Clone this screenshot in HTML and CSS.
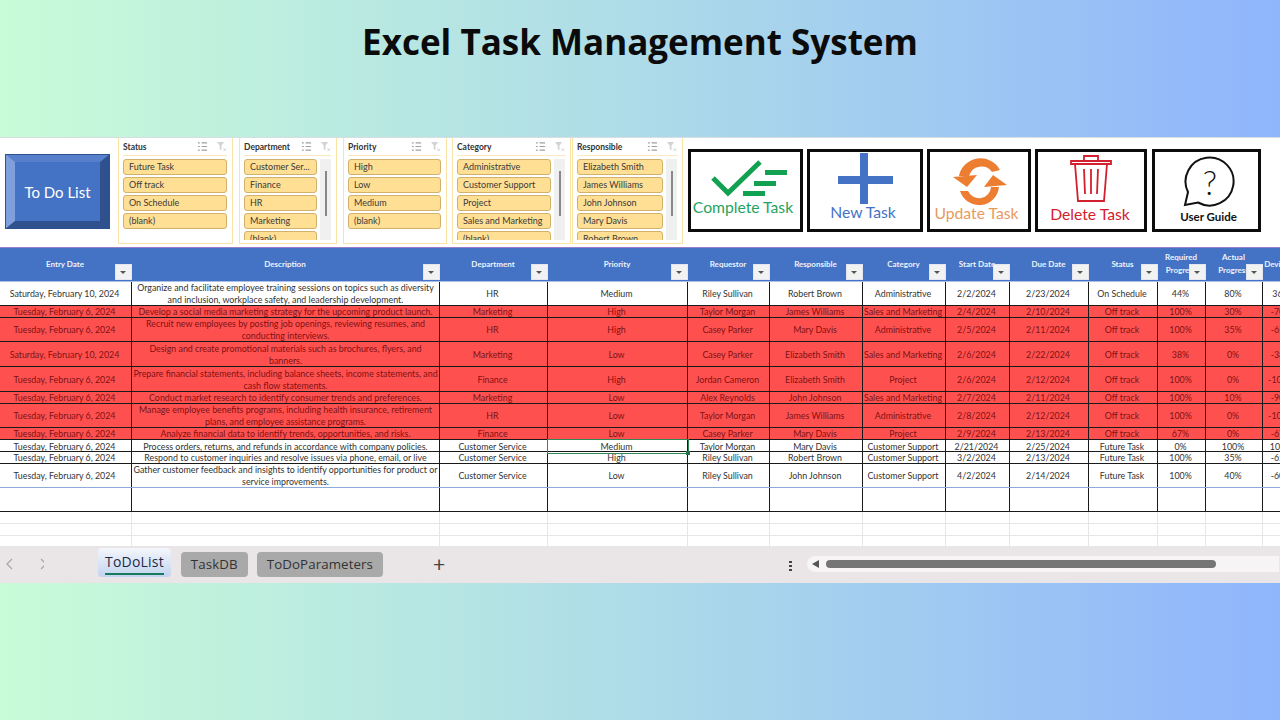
FILE: index.html
```html
<!DOCTYPE html>
<html lang="en">
<head>
    <meta charset="UTF-8">
    <title>Excel Task Management System</title>
    <link rel="stylesheet" href="styles.css">
</head>
<body>

    <svg class="defs" width="0" height="0">
        <symbol id="multi" viewBox="0 0 12 12">
            <path d="M1 2h2M1 6h2M1 10h2M5 2h6M5 6h6M5 10h6" stroke="#a0a0a0" stroke-width="1.2" fill="none"/>
        </symbol>
        <symbol id="clear" viewBox="0 0 12 12">
            <path d="M1 1h8L6 5v5L4 9V5z" fill="#d4d4d4"/>
            <path d="M8 8l3 3M11 8l-3 3" stroke="#cfcfcf" stroke-width="1"/>
        </symbol>
    </svg>

    <h1 class="title">Excel Task Management System</h1>

    <div class="sheet">
        <div class="ribbon">
            <div class="todo-btn">To Do List</div>

            <div class="slicer status">
                <div class="slicer-head"><span>Status</span><svg><use href="#multi"/></svg><svg><use href="#clear"/></svg></div>
                <div class="slicer-body">
                    <div class="items">
                        <div class="item">Future Task</div>
                        <div class="item">Off track</div>
                        <div class="item">On Schedule</div>
                        <div class="item">(blank)</div>
                    </div>
                </div>
            </div>

            <div class="slicer department">
                <div class="slicer-head"><span>Department</span><svg><use href="#multi"/></svg><svg><use href="#clear"/></svg></div>
                <div class="slicer-body">
                    <div class="items">
                        <div class="item">Customer Ser...</div>
                        <div class="item">Finance</div>
                        <div class="item">HR</div>
                        <div class="item">Marketing</div>
                        <div class="item">(blank)</div>
                    </div>
                    <div class="track"><div class="thumb"></div></div>
                </div>
            </div>

            <div class="slicer priority">
                <div class="slicer-head"><span>Priority</span><svg><use href="#multi"/></svg><svg><use href="#clear"/></svg></div>
                <div class="slicer-body">
                    <div class="items">
                        <div class="item">High</div>
                        <div class="item">Low</div>
                        <div class="item">Medium</div>
                        <div class="item">(blank)</div>
                    </div>
                </div>
            </div>

            <div class="slicer category">
                <div class="slicer-head"><span>Category</span><svg><use href="#multi"/></svg><svg><use href="#clear"/></svg></div>
                <div class="slicer-body">
                    <div class="items">
                        <div class="item">Administrative</div>
                        <div class="item">Customer Support</div>
                        <div class="item">Project</div>
                        <div class="item">Sales and Marketing</div>
                        <div class="item">(blank)</div>
                    </div>
                    <div class="track"><div class="thumb"></div></div>
                </div>
            </div>

            <div class="slicer responsible">
                <div class="slicer-head"><span>Responsible</span><svg><use href="#multi"/></svg><svg><use href="#clear"/></svg></div>
                <div class="slicer-body">
                    <div class="items">
                        <div class="item">Elizabeth Smith</div>
                        <div class="item">James Williams</div>
                        <div class="item">John Johnson</div>
                        <div class="item">Mary Davis</div>
                        <div class="item">Robert Brown</div>
                    </div>
                    <div class="track"><div class="thumb"></div></div>
                </div>
            </div>

            <div class="action complete">
                <svg viewBox="0 0 109 38" width="109" height="38">
                    <path d="M22 18l15 15L69 2" fill="none" stroke="#12a150" stroke-width="5"/>
                    <path d="M74 10h22v5H74zM63 21h22v5H63zM52 31h22v5H52z" fill="#12a150"/>
                </svg>
                <div class="label">Complete Task</div>
            </div>
            <div class="action new">
                <svg viewBox="0 0 110 51" width="110" height="51">
                    <path d="M50 0h8v23h25v8H58v20h-8V31H28v-8h22z" fill="#4472c4"/>
                </svg>
                <div class="label">New Task</div>
            </div>
            <div class="action update">
                <svg viewBox="0 0 98 50" width="98" height="50">
                    <g fill="#ed7d31">
                        <path d="M23 22L47 20L37 32z"/>
                        <path d="M29 21A22 22 0 0 1 70 15L62 17A13 13 0 0 0 39 21z"/>
                        <path d="M63 20L77 30L54 32z"/>
                        <path d="M30 36L38 36A12 12 0 0 0 61 32L69 32A20 20 0 0 1 30 36z"/>
                    </g>
                </svg>
                <div class="label">Update Task</div>
            </div>
            <div class="action delete">
                <svg viewBox="0 0 106 51" width="106" height="51">
                    <g fill="none" stroke="#d3202e" stroke-width="1.8">
                        <path d="M33 9h40v3H33zM46 9V4h14v5M37 12l3 37h26l3-37"/>
                        <path d="M46 17l1 25M53 17v25M60 17l-1 25"/>
                    </g>
                </svg>
                <div class="label">Delete Task</div>
            </div>
            <div class="action guide">
                <svg viewBox="0 0 104 56" width="104" height="56">
                    <path d="M33 39A24 24 0 1 1 43 49.500L30 52z" fill="none" stroke="#111" stroke-width="2"/>
                    <text x="55" y="42" class="mark">?</text>
                </svg>
                <div class="label">User Guide</div>
            </div>
        </div>

        <div class="row head">
            <div class="cell">Entry Date<i class="filter"></i></div>
            <div class="cell">Description<i class="filter"></i></div>
            <div class="cell">Department<i class="filter"></i></div>
            <div class="cell">Priority<i class="filter"></i></div>
            <div class="cell">Requestor<i class="filter"></i></div>
            <div class="cell">Responsible<i class="filter"></i></div>
            <div class="cell">Category<i class="filter"></i></div>
            <div class="cell">Start Date<i class="filter"></i></div>
            <div class="cell">Due Date<i class="filter"></i></div>
            <div class="cell">Status<i class="filter"></i></div>
            <div class="cell"><span>Required<br>Progress</span><i class="filter"></i></div>
            <div class="cell"><span>Actual<br>Progress</span><i class="filter"></i></div>
            <div class="cell">Deviation</div>
        </div>

        <div class="row tall">
            <div class="cell">Saturday, February 10, 2024</div>
            <div class="cell">Organize and facilitate employee training sessions on topics such as diversity and inclusion, workplace safety, and leadership development.</div>
            <div class="cell">HR</div><div class="cell">Medium</div><div class="cell">Riley Sullivan</div><div class="cell">Robert Brown</div><div class="cell">Administrative</div>
            <div class="cell">2/2/2024</div><div class="cell">2/23/2024</div><div class="cell">On Schedule</div><div class="cell">44%</div><div class="cell">80%</div><div class="cell">36%</div>
        </div>
        <div class="row short late">
            <div class="cell">Tuesday, February 6, 2024</div>
            <div class="cell">Develop a social media marketing strategy for the upcoming product launch.</div>
            <div class="cell">Marketing</div><div class="cell">High</div><div class="cell">Taylor Morgan</div><div class="cell">James Williams</div><div class="cell">Sales and Marketing</div>
            <div class="cell">2/4/2024</div><div class="cell">2/10/2024</div><div class="cell">Off track</div><div class="cell">100%</div><div class="cell">30%</div><div class="cell">-70%</div>
        </div>
        <div class="row tall late">
            <div class="cell">Tuesday, February 6, 2024</div>
            <div class="cell">Recruit new employees by posting job openings, reviewing resumes, and conducting interviews.</div>
            <div class="cell">HR</div><div class="cell">High</div><div class="cell">Casey Parker</div><div class="cell">Mary Davis</div><div class="cell">Administrative</div>
            <div class="cell">2/5/2024</div><div class="cell">2/11/2024</div><div class="cell">Off track</div><div class="cell">100%</div><div class="cell">35%</div><div class="cell">-65%</div>
        </div>
        <div class="row wide late">
            <div class="cell">Saturday, February 10, 2024</div>
            <div class="cell">Design and create promotional materials such as brochures, flyers, and banners.</div>
            <div class="cell">Marketing</div><div class="cell">Low</div><div class="cell">Casey Parker</div><div class="cell">Elizabeth Smith</div><div class="cell">Sales and Marketing</div>
            <div class="cell">2/6/2024</div><div class="cell">2/22/2024</div><div class="cell">Off track</div><div class="cell">38%</div><div class="cell">0%</div><div class="cell">-38%</div>
        </div>
        <div class="row wide late">
            <div class="cell">Tuesday, February 6, 2024</div>
            <div class="cell">Prepare financial statements, including balance sheets, income statements, and cash flow statements.</div>
            <div class="cell">Finance</div><div class="cell">High</div><div class="cell">Jordan Cameron</div><div class="cell">Elizabeth Smith</div><div class="cell">Project</div>
            <div class="cell">2/6/2024</div><div class="cell">2/12/2024</div><div class="cell">Off track</div><div class="cell">100%</div><div class="cell">0%</div><div class="cell">-100%</div>
        </div>
        <div class="row short late">
            <div class="cell">Tuesday, February 6, 2024</div>
            <div class="cell">Conduct market research to identify consumer trends and preferences.</div>
            <div class="cell">Marketing</div><div class="cell">Low</div><div class="cell">Alex Reynolds</div><div class="cell">John Johnson</div><div class="cell">Sales and Marketing</div>
            <div class="cell">2/7/2024</div><div class="cell">2/11/2024</div><div class="cell">Off track</div><div class="cell">100%</div><div class="cell">10%</div><div class="cell">-90%</div>
        </div>
        <div class="row tall late">
            <div class="cell">Tuesday, February 6, 2024</div>
            <div class="cell">Manage employee benefits programs, including health insurance, retirement plans, and employee assistance programs.</div>
            <div class="cell">HR</div><div class="cell">Low</div><div class="cell">Taylor Morgan</div><div class="cell">James Williams</div><div class="cell">Administrative</div>
            <div class="cell">2/8/2024</div><div class="cell">2/12/2024</div><div class="cell">Off track</div><div class="cell">100%</div><div class="cell">0%</div><div class="cell">-100%</div>
        </div>
        <div class="row short late">
            <div class="cell">Tuesday, February 6, 2024</div>
            <div class="cell">Analyze financial data to identify trends, opportunities, and risks.</div>
            <div class="cell">Finance</div><div class="cell">Low</div><div class="cell">Casey Parker</div><div class="cell">Mary Davis</div><div class="cell">Project</div>
            <div class="cell">2/9/2024</div><div class="cell">2/13/2024</div><div class="cell">Off track</div><div class="cell">67%</div><div class="cell">0%</div><div class="cell">-67%</div>
        </div>
        <div class="row short">
            <div class="cell">Tuesday, February 6, 2024</div>
            <div class="cell">Process orders, returns, and refunds in accordance with company policies.</div>
            <div class="cell">Customer Service</div><div class="cell selected">Medium</div><div class="cell">Taylor Morgan</div><div class="cell">Mary Davis</div><div class="cell">Customer Support</div>
            <div class="cell">2/21/2024</div><div class="cell">2/25/2024</div><div class="cell">Future Task</div><div class="cell">0%</div><div class="cell">100%</div><div class="cell">100%</div>
        </div>
        <div class="row short">
            <div class="cell">Tuesday, February 6, 2024</div>
            <div class="cell">Respond to customer inquiries and resolve issues via phone, email, or live</div>
            <div class="cell">Customer Service</div><div class="cell">High</div><div class="cell">Riley Sullivan</div><div class="cell">Robert Brown</div><div class="cell">Customer Support</div>
            <div class="cell">3/2/2024</div><div class="cell">2/13/2024</div><div class="cell">Future Task</div><div class="cell">100%</div><div class="cell">35%</div><div class="cell">-65%</div>
        </div>
        <div class="row tall last">
            <div class="cell">Tuesday, February 6, 2024</div>
            <div class="cell">Gather customer feedback and insights to identify opportunities for product or service improvements.</div>
            <div class="cell">Customer Service</div><div class="cell">Low</div><div class="cell">Riley Sullivan</div><div class="cell">John Johnson</div><div class="cell">Customer Support</div>
            <div class="cell">4/2/2024</div><div class="cell">2/14/2024</div><div class="cell">Future Task</div><div class="cell">100%</div><div class="cell">40%</div><div class="cell">-60%</div>
        </div>

        <div class="row tall">
            <div class="cell"></div><div class="cell"></div><div class="cell"></div><div class="cell"></div><div class="cell"></div><div class="cell"></div><div class="cell"></div><div class="cell"></div><div class="cell"></div><div class="cell"></div><div class="cell"></div><div class="cell"></div><div class="cell"></div>
        </div>
        <div class="row short empty">
            <div class="cell"></div><div class="cell"></div><div class="cell"></div><div class="cell"></div><div class="cell"></div><div class="cell"></div><div class="cell"></div><div class="cell"></div><div class="cell"></div><div class="cell"></div><div class="cell"></div><div class="cell"></div><div class="cell"></div>
        </div>
        <div class="row short empty">
            <div class="cell"></div><div class="cell"></div><div class="cell"></div><div class="cell"></div><div class="cell"></div><div class="cell"></div><div class="cell"></div><div class="cell"></div><div class="cell"></div><div class="cell"></div><div class="cell"></div><div class="cell"></div><div class="cell"></div>
        </div>
        <div class="row tail empty">
            <div class="cell"></div><div class="cell"></div><div class="cell"></div><div class="cell"></div><div class="cell"></div><div class="cell"></div><div class="cell"></div><div class="cell"></div><div class="cell"></div><div class="cell"></div><div class="cell"></div><div class="cell"></div><div class="cell"></div>
        </div>

        <div class="tabbar">
            <svg class="nav" viewBox="0 0 44 12" width="44" height="12">
                <path d="M12 1L7 6l5 5M41 1l5 5-5 5" fill="none" stroke="#a8a8a8" stroke-width="1.300"/>
            </svg>
            <div class="tab active">ToDoList</div>
            <div class="tab">TaskDB</div>
            <div class="tab">ToDoParameters</div>
            <div class="plus">+</div>
            <div class="dots"><i></i><i></i><i></i></div>
            <div class="scroll">
                <div class="arrow"></div>
                <div class="scroll-thumb"></div>
            </div>
        </div>
    </div>

</body>
</html>
```
FILE: styles.css
```css
body {
    margin: 0;
    height: 720px;
    overflow: hidden;
    font-family: "Lato", "Open Sans", sans-serif;
    background: linear-gradient(90deg, #c8fcd8, #aedbe8 50%, #8fb5fc);
}
.defs {
    position: absolute;
}
.title {
    margin: 0;
    height: 137px;
    padding-top: 17px;
    box-sizing: border-box;
    text-align: center;
    font-family: "Open Sans", sans-serif;
    font-size: 35px;
    line-height: 50px;
    font-weight: 700;
    color: #0b0b0b;
}
.sheet {
    position: relative;
    height: 446px;
    background: #fff;
    overflow: hidden;
    border-top: 1px solid #d8dde2;
    box-sizing: border-box;
}
/* selection edge along the top of the sheet */
.sheet::before {
    content: "";
    position: absolute;
    left: 546px;
    top: -1px;
    width: 141px;
    height: 1px;
    background: #1b6b3e;
}

/* ribbon */
.ribbon {
    display: flex;
    height: 109px;
    border-bottom: 1px solid #9a7fc8;
    box-sizing: content-box;
    align-items: flex-start;
}
.todo-btn {
    width: 105px;
    height: 75px;
    margin: 16px 8px 0 5px;
    box-sizing: border-box;
    display: flex;
    align-items: center;
    justify-content: center;
    background: #4472c4;
    border-style: solid;
    border-width: 8px 10px;
    border-color: #5680cc #2f528f #2f528f #7fa0dc;
    outline: 1px solid #2f528f;
    outline-offset: -1px;
    color: #fff;
    font-size: 15px;
    white-space: nowrap;
}
.slicer {
    height: 106px;
    box-sizing: border-box;
    border: 1px solid #fbe3a6;
    border-top: 0;
    padding: 0 5px 0 4px;
    background: #fff;
}
.status { width: 115px; margin-right: 6px; }
.department { width: 98px; margin-right: 6px; }
.priority { width: 104px; margin-right: 5px; }
.category { width: 119px; margin-right: 1px; }
.responsible { width: 111px; margin-right: 5px; }
.slicer-head {
    display: flex;
    align-items: center;
    height: 17px;
    border-bottom: 1px solid #fbe9bd;
    font-size: 8.5px;
    font-weight: 700;
    color: #333;
}
.slicer-head span {
    flex: 1;
}
.slicer-head svg {
    width: 11px;
    height: 11px;
    margin-left: 8px;
}
.slicer-body {
    display: flex;
    gap: 3px;
    height: 81px;
    margin-top: 3px;
    overflow: hidden;
}
.items {
    flex: 1;
}
.item {
    height: 16px;
    margin-bottom: 2px;
    padding-left: 5px;
    box-sizing: border-box;
    background: #ffdf94;
    border: 1px solid #d2b16a;
    border-radius: 3px;
    font-size: 9px;
    line-height: 14px;
    color: #3a3a3a;
    white-space: nowrap;
    overflow: hidden;
}
.track {
    width: 11px;
    background: #f0f0f0;
    display: flex;
    justify-content: center;
}
.thumb {
    width: 2px;
    height: 45px;
    margin-top: 12px;
    background: #888;
}
.action {
    height: 83px;
    margin-top: 11px;
    box-sizing: border-box;
    border: 3px solid #0c0c0c;
    text-align: center;
    overflow: hidden;
    font-size: 15.7px;
}
.action svg {
    display: block;
}
.label {
    white-space: nowrap;
    line-height: 16px;
}
.complete { width: 115px; margin-right: 4px; color: #1fa35e; }
.new { width: 116px; margin-right: 4px; color: #4472c4; }
.update { width: 104px; margin-right: 4px; color: #e89a5e; }
.delete { width: 112px; margin-right: 5px; color: #d3202e; }
.guide { width: 109px; color: #111; }
.complete svg { margin-top: 8px; }
.new svg { margin-top: 1px; }
.update svg { margin-top: 3px; }
.guide svg { margin-top: 1px; }
.complete .label { margin-top: 1px; padding-right: 5px; }
.new .label { padding-right: 4px; }
.update .label { padding-right: 5px; }
.delete .label { margin-top: 3px; padding-right: 2px; }
.guide .label { margin-top: 2px; padding-left: 4px; font-size: 11.5px; font-weight: 700; line-height: 12px; }
.mark {
    font-family: "Lato", sans-serif;
    font-weight: 300;
    font-size: 33px;
    text-anchor: middle;
    fill: #111;
}

/* table */
.row {
    display: grid;
    grid-template-columns: 132px 308px 108px 140px 82px 93px 83px 64px 79px 69px 48px 57px 39px;
    width: 1302px;
    box-sizing: border-box;
    border-bottom: 1px solid #1a1a1a;
    color: #333;
    font-size: 8.85px;
    line-height: 12px;
}
.cell {
    display: flex;
    align-items: center;
    justify-content: center;
    box-sizing: border-box;
    position: relative;
    overflow: hidden;
    text-align: center;
    white-space: nowrap;
    border-right: 1px solid #1a1a1a;
    padding: 1px 2px 0 0;
}
.cell:nth-child(2) {
    white-space: normal;
    padding-right: 0;
}
.head {
    height: 34px;
    background: #4472c4;
    color: #eef2fb;
    font-size: 8px;
    font-weight: 700;
    line-height: 13px;
    border-bottom: 1px solid #a9c0e8;
}
.head .cell {
    border-right: 0;
    padding: 0 2px 1px 0;
}
.filter {
    position: absolute;
    right: 0;
    bottom: 1px;
    width: 17px;
    height: 16px;
    background: #f2f2f2;
    border: 1px solid #e3e6ee;
    box-sizing: border-box;
}
.filter::after {
    content: "";
    position: absolute;
    left: 4px;
    top: 6px;
    border: 3.500px solid transparent;
    border-top: 3.500px solid #555;
    border-bottom: 0;
}
.tall { height: 24px; }
.wide { height: 25px; }
.short { height: 12px; }
.tail { height: 11px; }
.late {
    background: #ff5050;
    color: #7d1212;
}
.last {
    border-bottom: 1px solid #8eaadb;
}
.selected {
    overflow: visible;
    z-index: 1;
    outline: 1px solid #2f8a58;
}
.selected::after {
    content: "";
    position: absolute;
    right: -3px;
    bottom: -2px;
    width: 4px;
    height: 4px;
    background: #217346;
}
.empty {
    border-bottom: 1px solid #e6e6e6;
}
.empty .cell {
    border-right: 1px solid #e6e6e6;
}

/* sheet tabs */
.tabbar {
    display: flex;
    align-items: flex-start;
    height: 36px;
    background: #eae6e7;
    color: #333;
}
.nav {
    margin: 11px 0 0 0;
    flex: none;
}
.tab {
    height: 25px;
    margin: 5px 9px 0 0;
    padding: 0 10px;
    box-sizing: border-box;
    background: #a9a9a9;
    border-radius: 4px;
    font-family: "Open Sans", sans-serif;
    font-size: 13.3px;
    line-height: 25px;
    letter-spacing: .1px;
}
.tab.active {
    margin: 1px 10px 0 54px;
    height: 29px;
    padding: 0 7px;
    background: linear-gradient(#f4f6fb, #c2d4f0);
    font-size: 14px;
    letter-spacing: .2px;
    line-height: 27px;
    color: #1c2b45;
    position: relative;
}
.tab.active::after {
    content: "";
    position: absolute;
    left: 7px;
    right: 7px;
    bottom: 2px;
    height: 2px;
    background: #1c7a5c;
}
.plus {
    margin: 2px 0 0 41px;
    width: 20px;
    font-size: 21px;
    line-height: 30px;
    color: #444;
}
.dots {
    margin: 14px 0 0 336px;
    width: 3px;
}
.dots i {
    display: block;
    width: 3px;
    height: 2px;
    margin-bottom: 2px;
    background: #444;
}
.scroll {
    display: flex;
    align-items: center;
    width: 472px;
    height: 16px;
    margin: 9px 0 0 15px;
    background: #f6f4f5;
    border-radius: 8px 0 0 8px;
}
.arrow {
    margin-left: 5px;
    border: 4px solid transparent;
    border-right: 7px solid #555;
    border-left: 0;
}
.scroll-thumb {
    width: 390px;
    height: 8px;
    margin-left: 7px;
    background: #757575;
    border-radius: 4px;
}
```
